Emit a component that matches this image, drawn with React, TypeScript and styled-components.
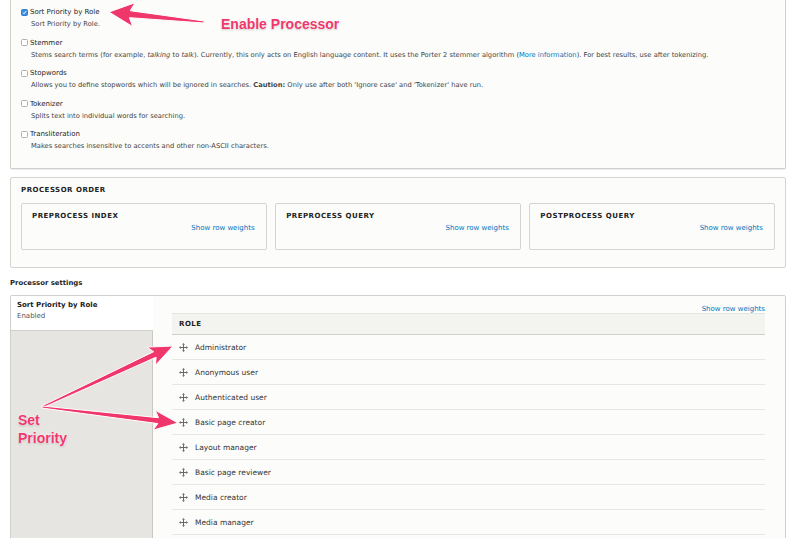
import React from "react";
import styled, { createGlobalStyle } from "styled-components";

const Global = createGlobalStyle`
  html, body { margin: 0; padding: 0; background: #fff; overflow: hidden; }
  body { font-family: "DejaVu Sans", "Lucida Grande", sans-serif; color: #222; }
  #root { width: 800px; height: 538px; overflow: hidden; }
`;

const Page = styled.div`
  position: relative;
  width: 800px;
  height: 538px;
  padding: 0 14px 0 10px;
  box-sizing: border-box;
  overflow: hidden;
`;

const TopPanel = styled.div`
  background: #fcfcfa;
  border: 1px solid #cfcfcb;
  border-top: none;
  border-radius: 0 0 2px 2px;
  box-shadow: 0 1px 1px rgba(0, 0, 0, 0.08);
  padding: 6px 10px 16px 10px;
  display: flex;
  flex-direction: column;
  gap: 6.5px;
`;

const Item = styled.div`
  display: flex;
  flex-direction: column;
`;

const LabelRow = styled.div`
  display: flex;
  align-items: center;
  gap: 2px;
  height: 12px;
  font-size: 7px;
  color: #1e1e1e;
`;

const Check = styled.span<{ $on?: boolean }>`
  width: 7px;
  height: 7px;
  box-sizing: border-box;
  border-radius: 1.5px;
  border: 1px solid ${(p) => (p.$on ? "#2f7fd0" : "#b0b0b0")};
  background: ${(p) => (p.$on ? "#3b8de0" : "#fff")};
  display: flex;
  align-items: center;
  justify-content: center;
  flex: none;
`;

const Desc = styled.div`
  height: 12px;
  line-height: 12px;
  font-size: 6.72px;
  color: #444;
  margin-left: 10px;
  white-space: nowrap;
`;

const Link = styled.a`
  color: #0074bd;
  text-decoration: none;
`;

const OrderPanel = styled.div`
  margin-top: 8px;
  background: #fcfcfa;
  border: 1px solid #d4d4d0;
  border-radius: 2px;
  padding: 6px 10px 17px 10px;
`;

const Caps = styled.div`
  font-size: 7px;
  font-weight: bold;
  letter-spacing: 0.5px;
  text-transform: uppercase;
  line-height: 12px;
  color: #222;
`;

const OrderGrid = styled.div`
  margin-top: 7px;
  display: grid;
  grid-template-columns: repeat(3, 1fr);
  gap: 8.5px;
`;

const OrderBox = styled.div`
  border: 1px solid #d4d4d0;
  border-radius: 2px;
  background: #fcfcfa;
  padding: 6px 11px 15px 10px;
  display: flex;
  flex-direction: column;
`;

const RightLink = styled(Link)`
  align-self: flex-end;
  font-size: 7px;
  line-height: 12px;
`;

const SectionLabel = styled.div`
  margin-top: 9px;
  margin-bottom: 6px;
  font-size: 6.9px;
  font-weight: bold;
  line-height: 12px;
  color: #222;
`;

const VTabs = styled.div`
  display: flex;
  height: 260px;
  border: 1px solid #cfcfcb;
  border-radius: 2px;
  background: #fcfcfa;
`;

const TabMenu = styled.div`
  width: 141px;
  flex: none;
  background: #e6e5e1;
  border-right: 1px solid #c8c8c4;
  display: flex;
  flex-direction: column;
`;

const ActiveTab = styled.div`
  background: #fff;
  margin-right: -1px;
  border-bottom: 1px solid #cfcfcb;
  padding: 4px 6px 8px 6px;
  display: flex;
  flex-direction: column;
`;

const TabTitle = styled.div`
  font-size: 7px;
  font-weight: bold;
  line-height: 11px;
  color: #222;
`;

const TabSub = styled.div`
  font-size: 7px;
  line-height: 11px;
  color: #555;
`;

const Pane = styled.div`
  flex: 1;
  padding: 9px 20px 0 19px;
  display: flex;
  flex-direction: column;
`;

const PaneLink = styled(Link)`
  align-self: flex-end;
  font-size: 7px;
  line-height: 9px;
  margin-bottom: -1px;
`;

const Table = styled.div`
  display: flex;
  flex-direction: column;
`;

const HeadRow = styled.div`
  height: 20px;
  display: flex;
  align-items: center;
  padding-left: 7px;
  background: #f3f3ef;
  border-top: 1px solid #e4e4e0;
  border-bottom: 1px solid #cfcfcb;
`;

const Row = styled.div`
  height: 24px;
  display: flex;
  align-items: center;
  gap: 7px;
  padding-left: 7px;
  border-bottom: 1px solid #e8e8e3;
  font-size: 7.5px;
  color: #333;
`;

const Annot = styled.div`
  position: absolute;
  font-family: "Liberation Sans", Arial, sans-serif;
  font-weight: bold;
  font-size: 14px;
  line-height: 18px;
  color: #f0376c;
  text-shadow: 0 0 1px #fff, 0 0 2px #fff, 0 1px 2px rgba(0,0,0,0.25);
  white-space: nowrap;
`;

const Overlay = styled.svg`
  position: absolute;
  left: 0;
  top: 0;
  pointer-events: none;
`;

const DragIcon = () => (
  <svg width="9" height="9" viewBox="0 0 9 9">
    <g fill="#666" stroke="#666">
      <path d="M4.5 1.5v6M1.5 4.5h6" strokeWidth="1" fill="none" />
      <path d="M4.5 0L3 1.8h3z M4.5 9L3 7.2h3z M0 4.5L1.8 3v3z M9 4.5L7.2 3v3z" stroke="none" />
    </g>
  </svg>
);

const CheckMark = () => (
  <svg width="5" height="5" viewBox="0 0 5 5">
    <path d="M0.8 2.6L2 3.8L4.2 1" stroke="#fff" strokeWidth="1" fill="none" />
  </svg>
);

type P = [number, number];
function arrowPoints(tail: P, tip: P, headLen: number, headHalf: number, neckHalf: number, tailHalf: number) {
  const dx = tip[0] - tail[0];
  const dy = tip[1] - tail[1];
  const len = Math.hypot(dx, dy);
  const ux = dx / len;
  const uy = dy / len;
  const nx = -uy;
  const ny = ux;
  const bx = tip[0] - ux * headLen;
  const by = tip[1] - uy * headLen;
  const bbx = bx - ux * 4;
  const bby = by - uy * 4;
  const pts: P[] = [
    [tail[0] + nx * tailHalf, tail[1] + ny * tailHalf],
    [bx + nx * neckHalf, by + ny * neckHalf],
    [bbx + nx * headHalf, bby + ny * headHalf],
    tip,
    [bbx - nx * headHalf, bby - ny * headHalf],
    [bx - nx * neckHalf, by - ny * neckHalf],
    [tail[0] - nx * tailHalf, tail[1] - ny * tailHalf],
  ];
  return pts.map((p) => `${p[0].toFixed(1)},${p[1].toFixed(1)}`).join(" ");
}

const items = [
  { label: "Sort Priority by Role", on: true, desc: <>Sort Priority by Role.</> },
  {
    label: "Stemmer",
    desc: (
      <>
        Stems search terms (for example, <em>talking</em> to <em>talk</em>). Currently, this only acts on English
        language content. It uses the Porter 2 stemmer algorithm (<Link href="#">More information</Link>). For best
        results, use after tokenizing.
      </>
    ),
  },
  {
    label: "Stopwords",
    desc: (
      <>
        Allows you to define stopwords which will be ignored in searches. <b>Caution:</b> Only use after both 'Ignore
        case' and 'Tokenizer' have run.
      </>
    ),
  },
  { label: "Tokenizer", desc: <>Splits text into individual words for searching.</> },
  { label: "Transliteration", desc: <>Makes searches insensitive to accents and other non-ASCII characters.</> },
];

const roles = [
  "Administrator",
  "Anonymous user",
  "Authenticated user",
  "Basic page creator",
  "Layout manager",
  "Basic page reviewer",
  "Media creator",
  "Media manager",
];

export default function App() {
  return (
    <>
      <Global />
      <Page>
        <TopPanel>
          {items.map((it) => (
            <Item key={it.label}>
              <LabelRow>
                <Check $on={it.on}>{it.on && <CheckMark />}</Check>
                {it.label}
              </LabelRow>
              <Desc>{it.desc}</Desc>
            </Item>
          ))}
        </TopPanel>

        <OrderPanel>
          <Caps>Processor order</Caps>
          <OrderGrid>
            {["Preprocess index", "Preprocess query", "Postprocess query"].map((t) => (
              <OrderBox key={t}>
                <Caps>{t}</Caps>
                <RightLink href="#">Show row weights</RightLink>
              </OrderBox>
            ))}
          </OrderGrid>
        </OrderPanel>

        <SectionLabel>Processor settings</SectionLabel>

        <VTabs>
          <TabMenu>
            <ActiveTab>
              <TabTitle>Sort Priority by Role</TabTitle>
              <TabSub>Enabled</TabSub>
            </ActiveTab>
          </TabMenu>
          <Pane>
            <PaneLink href="#">Show row weights</PaneLink>
            <Table>
              <HeadRow>
                <Caps>Role</Caps>
              </HeadRow>
              {roles.map((r) => (
                <Row key={r}>
                  <DragIcon />
                  {r}
                </Row>
              ))}
            </Table>
          </Pane>
        </VTabs>

        <Annot style={{ left: 221, top: 15 }}>Enable Processor</Annot>
        <Annot style={{ left: 18, top: 411 }}>
          Set
          <br />
          Priority
        </Annot>

        <Overlay width="800" height="538" viewBox="0 0 800 538">
          <g fill="#f0376c" stroke="#fff" strokeWidth="1" strokeLinejoin="round">
            <polygon points={arrowPoints([204, 22], [109, 12], 21, 12, 3.5, 1)} />
            <polygon points={arrowPoints([42, 407], [173, 346], 20, 10, 3, 1)} />
            <polygon points={arrowPoints([42, 407], [178, 423], 20, 10, 3, 1)} />
          </g>
        </Overlay>
      </Page>
    </>
  );
}
